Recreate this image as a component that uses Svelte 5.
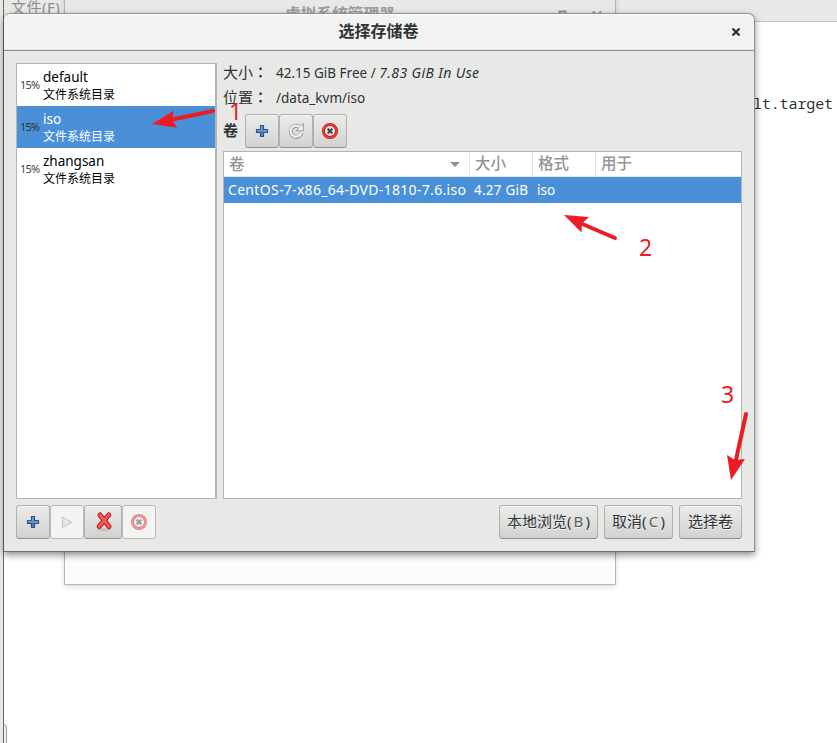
<script lang="ts">
  interface Pool {
    name: string;
    type: string;
    usage: string;
  }

  interface Volume {
    name: string;
    size: string;
    format: string;
    usedBy: string;
  }

  const pools: Pool[] = [
    { name: 'default', type: '文件系统目录', usage: '15%' },
    { name: 'iso', type: '文件系统目录', usage: '15%' },
    { name: 'zhangsan', type: '文件系统目录', usage: '15%' }
  ];

  const volumes: Volume[] = [
    { name: 'CentOS-7-x86_64-DVD-1810-7.6.iso', size: '4.27 GiB', format: 'iso', usedBy: '' }
  ];

  let selectedPool = $state('iso');
  let selectedVolume = $state(volumes[0].name);
</script>

{#snippet plusIcon()}
  <svg width="16" height="16" viewBox="0 0 16 16">
    <path d="M6.500 2.500h3v4h4v3h-4v4h-3v-4h-4v-3h4z" fill="#5583bd" stroke="#2a5390" stroke-width="1.200" stroke-linejoin="round" />
    <path d="M7.500 3.500v4h-4M9 8h4" fill="none" stroke="#8fb2dc" stroke-width=".8" />
  </svg>
{/snippet}

{#snippet stopIcon()}
  <svg width="18" height="18" viewBox="0 0 18 18">
    <circle cx="9" cy="9" r="6.500" fill="#f4f4f3" stroke="#cf1417" stroke-width="3" />
    <circle cx="9" cy="9" r="6.500" fill="none" stroke="#f03a3a" stroke-width="1.500" />
    <path d="M6.600 6.600l4.800 4.800M11.400 6.600l-4.800 4.800" stroke="#4b4f51" stroke-width="2.200" />
  </svg>
{/snippet}

<div class="desktop">
  <!-- Windows behind the dialog -->
  <div class="main-window">
    <div class="menubar"></div>
    <div class="menu-text">文件(F)</div>
    <div class="console">lt.target</div>
    <div class="corner"></div>
  </div>
  <div class="manager-window">
    <div class="manager-bar">
      <span class="manager-title">虚拟系统管理器</span>
      <svg class="manager-controls" width="50" height="14" viewBox="0 0 50 14">
        <path d="M3.500 16v-4.500h6V16M37 11.500l6 6M45 11.500l-6 6" fill="none" stroke="#8b8e8f" stroke-width="2" />
      </svg>
    </div>
  </div>

  <!-- Storage volume dialog -->
  <div class="dialog">
    <header class="titlebar">
      <h1>选择存储卷</h1>
      <button class="close" aria-label="关闭">
        <svg width="10" height="10" viewBox="0 0 10 10">
          <path d="M1.500 1.500l7 7M8.500 1.500l-7 7" stroke="#2e3436" stroke-width="2.300" />
        </svg>
      </button>
    </header>

    <div class="content">
      <div class="pool-list">
        {#each pools as pool (pool.name)}
          <button class="pool" class:selected={selectedPool === pool.name} onclick={() => (selectedPool = pool.name)}>
            <span class="usage">{pool.usage}</span>
            <span class="pool-text">
              <span class="pool-name">{pool.name}</span>
              <span class="pool-type">{pool.type}</span>
            </span>
          </button>
        {/each}
      </div>

      <div class="details">
        <div class="info">
          <span class="label">大小<b>：</b></span>
          <span class="value">42.15 GiB Free / <i>7.83 GiB In Use</i></span>
        </div>
        <div class="info">
          <span class="label">位置<b>：</b></span>
          <span class="value">/data_kvm/iso</span>
        </div>
        <div class="vol-tools">
          <strong>卷</strong>
          <button class="btn icon" aria-label="新建卷">{@render plusIcon()}</button>
          <button class="btn icon" aria-label="刷新">
            <svg width="18" height="18" viewBox="0 0 18 18">
              <path d="M12.300 4.800A5.500 5.500 0 1 0 14.500 11" fill="none" stroke="#999b99" stroke-width="4" />
              <path d="M16.300 1.500v7.300h-7.300z" fill="#f1f1f0" stroke="#999b99" stroke-linejoin="round" />
              <path d="M13 5.300A5.500 5.500 0 1 0 14.200 11" fill="none" stroke="#f1f1f0" stroke-width="2.200" />
            </svg>
          </button>
          <button class="btn icon" aria-label="删除卷">{@render stopIcon()}</button>
        </div>
        <div class="table">
          <div class="row head">
            <span class="sorted">卷 <i class="arrow"></i></span>
            <span>大小</span>
            <span>格式</span>
            <span>用于</span>
          </div>
          {#each volumes as vol (vol.name)}
            <button class="row" class:selected={selectedVolume === vol.name} onclick={() => (selectedVolume = vol.name)}>
              <span class="file">{vol.name}</span>
              <span class="size">{vol.size}</span>
              <span>{vol.format}</span>
              <span>{vol.usedBy}</span>
            </button>
          {/each}
        </div>
      </div>
    </div>

    <footer class="actions">
      <button class="btn icon" aria-label="添加池">{@render plusIcon()}</button>
      <button class="btn icon disabled" aria-label="启动池">
        <svg width="16" height="16" viewBox="0 0 16 16">
          <path d="M3.500 3v10.500l9-5.250z" fill="#e6e7e6" stroke="#bfc1be" stroke-linejoin="round" />
        </svg>
      </button>
      <button class="btn icon wide" aria-label="删除池">
        <svg width="20" height="22" viewBox="0 0 20 22">
          <ellipse cx="10" cy="18.500" rx="7.500" ry="1.600" fill="#c0c0be" />
          <path d="M6 4L15 15.500M14.800 4L5.200 15.300" stroke="#b50d12" stroke-width="5" stroke-linecap="round" />
          <path d="M6 4L15 15.500M14.800 4L5.200 15.300" stroke="#f15a5a" stroke-width="3.200" stroke-linecap="round" />
        </svg>
      </button>
      <button class="btn icon disabled faded" aria-label="停止池">{@render stopIcon()}</button>
      <div class="choices">
        <button class="btn">本地浏览<span class="key">(<em>B</em>)</span></button>
        <button class="btn">取消<span class="key">(<em>C</em>)</span></button>
        <button class="btn">选择卷</button>
      </div>
    </footer>
  </div>

  <!-- Step markers -->
  <svg class="marks" width="837" height="743" viewBox="0 0 837 743">
    <g stroke="#ed1c24" stroke-width="4" stroke-linecap="round">
      <path d="M213 111L170 120" />
      <path d="M615 238L580 223" />
      <path d="M746 414L735.500 462" />
    </g>
    <g fill="#ed1c24">
      <path d="M152 124L174 110.500L172 119.500L177 127.800z" />
      <path d="M564 215L589 217L582 223.500L581.500 232.500z" />
      <path d="M731 480L727 455L735 460L745 459z" />
    </g>
  </svg>
  <span class="step one">1</span>
  <span class="step two">2</span>
  <span class="step three">3</span>
</div>

<style>
  :global(body) {
    margin: 0;
    overflow: hidden;
  }

  .desktop {
    position: relative;
    width: 837px;
    height: 743px;
    overflow: hidden;
    background: #e8e8e7;
    color: #2e3436;
    font: 13.5px/18px "Noto Sans", "Noto Sans CJK SC", sans-serif;
  }

  .desktop * { box-sizing: border-box; }

  button {
    padding: 0;
    border: 0;
    background: none;
    color: inherit;
    font: inherit;
    text-align: left;
  }

  svg { display: block; }

  .main-window {
    position: absolute;
    inset: 0 0 0 3px;
    border-left: 1px solid #666763;
    background: #fff;
  }

  .menubar {
    height: 22px;
    border-bottom: 1px solid #c6c6c4;
    background: #e8e8e7;
  }

  .menu-text {
    position: absolute;
    top: -2px;
    left: 7px;
    color: #8b8e8f;
    font-size: 15px;
    letter-spacing: 0.5px;
  }

  .console {
    position: absolute;
    top: 93px;
    right: 4px;
    font: 15px/20px "Noto Sans Mono", "DejaVu Sans Mono", monospace;
    letter-spacing: -0.1px;
  }

  .corner {
    position: absolute;
    left: -1px;
    bottom: -4px;
    width: 4px;
    height: 23px;
    border: 1px solid #999b99;
    border-left-color: #666763;
    border-top-right-radius: 4px;
    background: #f1f1f0;
  }

  .manager-window {
    position: absolute;
    top: -12px;
    left: 64px;
    width: 552px;
    height: 597px;
    border: 1px solid #b5b6b3;
    border-radius: 7px 7px 0 0;
    background: #fcfcfc;
    box-shadow: 0 2px 5px rgba(0, 0, 0, 0.13);
  }

  .manager-bar {
    position: relative;
    height: 40px;
    border-radius: 7px 7px 0 0;
    background: #e8e8e7;
    color: #999b9b;
    text-align: center;
  }

  .manager-title {
    display: block;
    padding-top: 16px;
    font-size: 15.7px;
    font-weight: bold;
  }

  .manager-controls {
    position: absolute;
    top: 11px;
    left: 491px;
  }

  .dialog {
    position: absolute;
    top: 13px;
    left: 4px;
    display: flex;
    flex-direction: column;
    width: 751px;
    height: 539px;
    border: 1px solid #92938e;
    border-bottom-color: #6f706d;
    border-left: 0;
    border-radius: 7px 7px 0 0;
    background: #e8e8e7;
    box-shadow: 0 3px 7px rgba(0, 0, 0, 0.45);
  }

  .titlebar {
    display: grid;
    grid-template-columns: 37px 1fr 37px;
    flex: none;
    align-items: center;
    height: 37px;
    border-bottom: 1px solid #8f918c;
    border-radius: 7px 7px 0 0;
    background: #f3f3f3;
    box-shadow: inset 0 1px #fff, inset 0 -1px #e3e3e1;
  }

  h1 {
    grid-column: 2;
    margin: 0 1px 2px 0;
    font-size: 16px;
    text-align: center;
  }

  .close {
    display: flex;
    justify-content: center;
  }

  .content {
    display: flex;
    flex: 1;
    gap: 6px;
    padding: 12px 12px 0;
  }

  .pool-list {
    width: 201px;
    border: 1px solid #b5b6b3;
    border-right-width: 2px;
    background: #fff;
  }

  .pool {
    display: flex;
    align-items: center;
    width: 100%;
    height: 42px;
    padding-left: 3px;
    color: #000;
  }

  .usage {
    width: 23px;
    color: #444;
    font: 11px/18px "Noto Sans", sans-serif;
    letter-spacing: -0.8px;
  }

  .pool-text {
    display: flex;
    flex-direction: column;
  }

  .pool-name { line-height: 18px; }

  .pool-type {
    font-size: 12px;
    line-height: 17px;
  }

  .pool.selected { background: #4a90d9; color: #fff; }
  .pool.selected .usage { color: #333; }

  .details {
    display: flex;
    flex: 1;
    flex-direction: column;
    min-width: 0;
  }

  .info {
    display: flex;
    align-items: center;
    height: 25px;
    padding-bottom: 5px;
  }

  .label {
    width: 53px;
    padding-bottom: 2px;
    font-size: 15px;
    white-space: nowrap;
  }

  .label b {
    font-family: "Noto Sans CJK TC", sans-serif;
    font-weight: 500;
  }

  .value i {
    font-size: 14px;
    letter-spacing: 0.4px;
  }

  .vol-tools {
    display: flex;
    align-items: center;
    height: 34px;
    margin: 1px 0 3px;
  }

  .vol-tools strong {
    width: 22px;
    padding-bottom: 2px;
    font-size: 15px;
  }

  .table {
    flex: 1;
    border: 1px solid #b5b6b3;
    background: #fff;
  }

  .row {
    display: grid;
    grid-template-columns: 246px 63px 63px 1fr;
    align-items: center;
    width: 100%;
    height: 26px;
    white-space: nowrap;
  }

  .row span { padding-left: 4px; }
  .row .file { font-size: 14px; letter-spacing: 0.31px; }
  .row .size { letter-spacing: 0.25px; }
  .row.selected { background: #4a90d9; color: #fff; }

  .head {
    height: 25px;
    border-bottom: 1px solid #e3e3e1;
    color: #929595;
    font-size: 15.5px;
    font-weight: 500;
  }

  .head span {
    height: 24px;
    padding-left: 5px;
    border-right: 1px solid #e3e3e1;
    line-height: 22px;
  }

  .head span:last-child { border-right: 0; }

  .sorted {
    display: flex;
    align-items: center;
    justify-content: space-between;
    padding-right: 9px;
  }

  .arrow {
    border: 5px solid transparent;
    border-top-color: #8e9192;
    border-bottom: 0;
  }

  .actions {
    display: flex;
    flex: none;
    height: 52px;
    padding: 6px 12px 12px;
  }

  .choices {
    display: flex;
    gap: 6px;
    margin-left: auto;
  }

  .btn {
    height: 34px;
    padding: 0 8px 2px;
    border: 1px solid #b0b1ad;
    border-bottom-color: #92938e;
    border-radius: 3px;
    background: linear-gradient(#ebebea, #d2d2d0);
    box-shadow: inset 0 1px #f5f5f4;
    font-size: 15px;
    text-shadow: 0 1px rgba(255, 255, 255, 0.7);
    white-space: nowrap;
  }

  .choices .btn:not(:last-child) { padding: 0 7px 2px; }

  .key {
    display: inline-flex;
    justify-content: space-between;
    width: 23px;
  }

  .btn em {
    color: #5c6061;
    font-style: normal;
  }

  .icon {
    display: flex;
    align-items: center;
    justify-content: center;
    width: 34px;
    padding: 0;
  }

  .icon.wide { width: 38px; padding-left: 1px; }

  .disabled {
    border-color: #b9bab7;
    background: #f3f3f2;
  }

  .faded :global(svg) { opacity: 0.5; }

  .marks {
    position: absolute;
    inset: 0;
    pointer-events: none;
  }

  .step {
    position: absolute;
    color: #ed1c24;
    font: 23px/28px "Noto Sans", sans-serif;
  }

  .one { top: 97px; left: 229px; }
  .two { top: 233px; left: 639px; }
  .three { top: 380px; left: 721px; }
</style>
